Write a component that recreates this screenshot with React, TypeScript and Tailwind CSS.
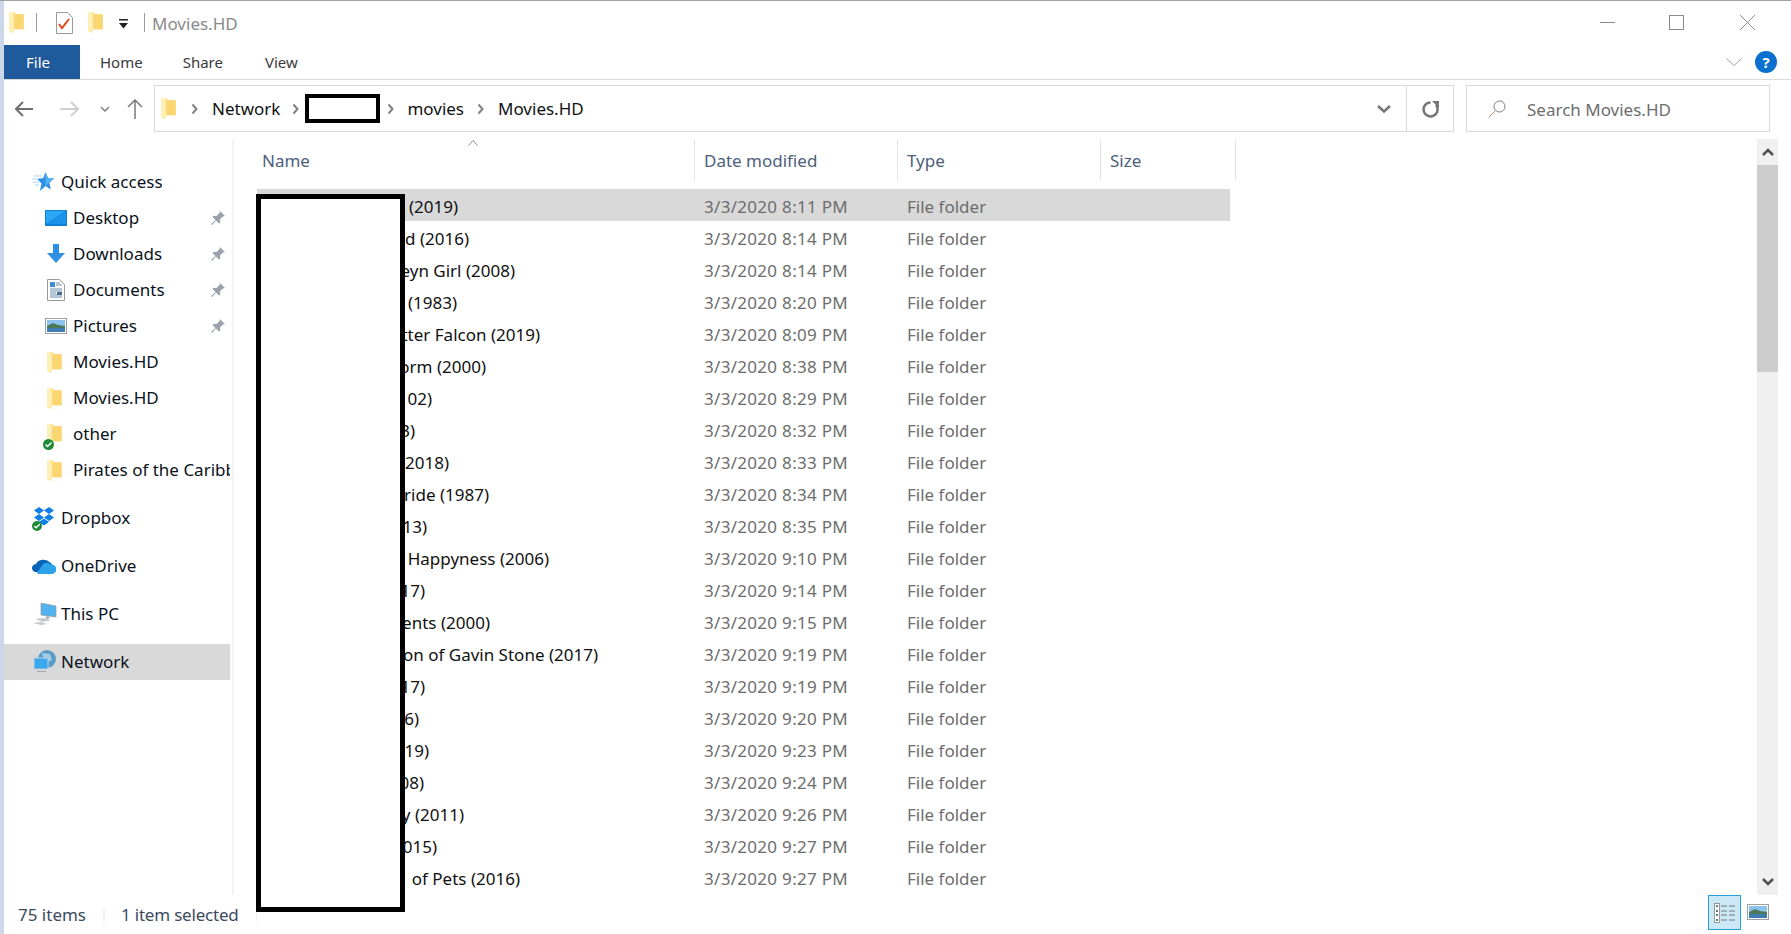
import React from "react";

const font = { fontFamily: '"Noto Sans", sans-serif' };

const rows = [
  { name: "(2019)", end: "w-[201px]", date: "3/3/2020 8:11 PM" },
  { name: "d (2016)", end: "w-[212px]", date: "3/3/2020 8:14 PM" },
  { name: "eyn Girl (2008)", end: "w-[258px]", date: "3/3/2020 8:14 PM" },
  { name: "(1983)", end: "w-[200px]", date: "3/3/2020 8:20 PM" },
  { name: "tter Falcon (2019)", end: "w-[283px]", date: "3/3/2020 8:09 PM" },
  { name: "orm (2000)", end: "w-[229px]", date: "3/3/2020 8:38 PM" },
  { name: "02)", end: "w-[175px]", date: "3/3/2020 8:29 PM" },
  { name: "3)", end: "w-[158px]", date: "3/3/2020 8:32 PM" },
  { name: "2018)", end: "w-[192px]", date: "3/3/2020 8:33 PM" },
  { name: "ride (1987)", end: "w-[232px]", date: "3/3/2020 8:34 PM" },
  { name: "13)", end: "w-[170px]", date: "3/3/2020 8:35 PM" },
  { name: "Happyness (2006)", end: "w-[292px]", date: "3/3/2020 9:10 PM" },
  { name: "17)", end: "w-[168px]", date: "3/3/2020 9:14 PM" },
  { name: "ents (2000)", end: "w-[233px]", date: "3/3/2020 9:15 PM" },
  { name: "on of Gavin Stone (2017)", end: "w-[341px]", date: "3/3/2020 9:19 PM" },
  { name: "17)", end: "w-[168px]", date: "3/3/2020 9:19 PM" },
  { name: "6)", end: "w-[162px]", date: "3/3/2020 9:20 PM" },
  { name: "19)", end: "w-[172px]", date: "3/3/2020 9:23 PM" },
  { name: "08)", end: "w-[167px]", date: "3/3/2020 9:24 PM" },
  { name: "y (2011)", end: "w-[207px]", date: "3/3/2020 9:26 PM" },
  { name: "015)", end: "w-[180px]", date: "3/3/2020 9:27 PM" },
  { name: "of Pets (2016)", end: "w-[263px]", date: "3/3/2020 9:27 PM" },
];

const Folder = ({ className }: { className?: string }) => (
  <svg viewBox="0 0 15 22" className={className}>
    <path d="M0 0h5l2 2h8v16H5l-1 4-4-2z" fill="#fbdc82" />
    <path d="M6 3h9v15H6z" fill="#fad671" />
    <path d="M0 0h4.500v21L0 20z" fill="#fff0b8" />
  </svg>
);

const Pin = () => (
  <svg viewBox="0 0 16 16" className="h-[16px] w-[16px]">
    <path d="M10 1l5 5-2 .5-3 3 .2 3-1.2 1-3-3L2 15l-1-1 4.500-4-3-3 1-1.200 3 .2 3-3z" fill="#9aa3ab" />
  </svg>
);

const Star = () => (
  <svg viewBox="0 0 22 20" className="h-[20px] w-[22px]">
    <path d="M13.500 0l2.500 6 6 .6-4.600 4.200 1.400 6.700-5.300-3.500-5.600 5 1.600-7.500L5 6.800l6.200-.6z" fill="#2b90e8" />
    <path d="M13.500 0l2.500 6 6 .6-8.500 7.400z" fill="#55b2f5" />
    <path d="M2 4h8M0 7h5M1 10h6M3 13h4" stroke="#a9d6f7" strokeWidth="1" />
  </svg>
);

const Desktop = () => (
  <svg viewBox="0 0 22 16" className="h-[16px] w-[22px]">
    <rect width="22" height="16" fill="#0f7fd8" />
    <path d="M1 14V1h20z" fill="#2aa7f5" />
    <path d="M1 14h20V2z" fill="#1a93ea" />
  </svg>
);

const Download = () => (
  <svg viewBox="0 0 20 20" className="h-[20px] w-[20px]">
    <path d="M7 0h6v9h6l-9 10-9-10h6z" fill="#2f8fe4" />
  </svg>
);

const Documents = () => (
  <svg viewBox="0 0 18 22" className="h-[22px] w-[18px]">
    <path d="M.5.500h12l5 5v16H.5z" fill="#fff" stroke="#9a9a9a" />
    <rect x="3" y="3" width="5" height="5" fill="#3a8fd8" />
    <path d="M9 4h4M9 6h6M3 10h12M3 12h12M3 14h6M3 16h12M3 18h12" stroke="#6f8ca8" />
    <rect x="10" y="13" width="5" height="3" fill="#4a6f8a" />
  </svg>
);

const Pictures = ({ className }: { className?: string }) => (
  <svg viewBox="0 0 22 16" className={className}>
    <rect x=".5" y=".5" width="21" height="15" fill="#fff" stroke="#a0a0a0" />
    <rect x="2" y="2" width="18" height="6" fill="#8fc3ee" />
    <path d="M2 8l6-3 5 2 7 1v2H2z" fill="#4d7a5a" />
    <rect x="2" y="10" width="18" height="4" fill="#3f7cb0" />
  </svg>
);

const Check = ({ className }: { className: string }) => (
  <svg viewBox="0 0 11 11" className={className}>
    <circle cx="5.500" cy="5.500" r="5.500" fill="#1d8a36" />
    <path d="M2.500 5.500l2 2 4-4" stroke="#fff" strokeWidth="1.500" fill="none" />
  </svg>
);

const Dropbox = () => (
  <svg viewBox="0 0 24 22" className="h-[22px] w-[24px]">
    <path d="M7 0l5 3.500L7 7 2 3.500zM17 0l5 3.500L17 7l-5-3.500zM7 7l5 3.500L7 14l-5-3.500zM17 7l5 3.500L17 14l-5-3.500zM12 11.500l5 3.500-5 3.500L7 15z" fill="#0f7ee8" />
  </svg>
);

const OneDrive = () => (
  <svg viewBox="0 0 24 16" className="h-[16px] w-[24px]">
    <path d="M4 6a8 6.500 0 0 1 14-1.500 5 5 0 0 1 2 1.500l-9 8H5A4.500 4 0 0 1 4 6z" fill="#0a63b8" />
    <path d="M10 7.500a5.500 5 0 0 1 9-1 4.700 4.700 0 0 1 1 9.500H6l-1-1z" fill="#2ba3e8" />
  </svg>
);

const ThisPc = () => (
  <svg viewBox="0 0 24 22" className="h-[22px] w-[24px]">
    <path d="M8 0l15 3v11L8 12z" fill="#4fb3f0" stroke="#9a9a9a" strokeWidth=".7" />
    <path d="M14 13l3 1-2 2-3-1z" fill="#a8b0b8" />
    <path d="M2 16l8-1 8 2-8 2zM0 20l8-1 6 2-6 1z" fill="#c4c8cc" />
  </svg>
);

const NetworkIcon = () => (
  <svg viewBox="0 0 24 24" className="h-[24px] w-[24px]">
    <circle cx="14" cy="9" r="9" fill="#5a9cc8" />
    <path d="M9 3l8 1 2 6-7 3z" fill="#a5cbe2" />
    <rect x="1" y="8" width="14" height="11" fill="#39a8ee" stroke="#c0d4e0" />
    <path d="M4 21h9v1H4z" fill="#a0a8b0" />
  </svg>
);

const Crumb = ({ className = "" }: { className?: string }) => (
  <svg viewBox="0 0 7 12" className={`h-[12px] w-[7px] ${className}`}>
    <path d="M1.500 1.500L5.500 6l-4 4.500" stroke="#808080" strokeWidth="2" fill="none" />
  </svg>
);

const NavRow = ({
  icon,
  label,
  pin,
  iconBox = "w-[31px] pl-[2px]",
  outer = "pl-[45px]",
  selected,
}: {
  icon: React.ReactNode;
  label: string;
  pin?: boolean;
  iconBox?: string;
  outer?: string;
  selected?: boolean;
}) => (
  <div className={`flex h-[36px] items-center overflow-hidden ${outer} ${selected ? "bg-[#d9d9d9]" : ""}`}>
    <span className={`relative flex shrink-0 items-center ${iconBox}`}>{icon}</span>
    <span className="whitespace-nowrap text-[17px] text-[#0a1220]">{label}</span>
    {pin && (
      <span className="ml-auto mr-[4px]">
        <Pin />
      </span>
    )}
  </div>
);

const HeaderCell = ({ className, label }: { className: string; label: string }) => (
  <div className={`flex h-[41px] items-center border-r border-[#e5e5e5] pt-[2px] text-[17px] text-[#4c607a] ${className}`}>
    {label}
  </div>
);

export default function App() {
  return (
    <div className="flex h-[934px] w-[1791px] overflow-hidden bg-white" style={font}>
      <div className="w-[4px] shrink-0 bg-[#ccd7e9]" />
      <div className="relative flex min-w-0 flex-1 flex-col">
        <div className="absolute -left-[4px] right-0 top-0 h-[1px] bg-[#a0a0a0]" />

        {/* title bar */}
        <div className="flex h-[45px] shrink-0 items-center">
          <Folder className="ml-[5px] h-[21px] w-[15px]" />
          <div className="ml-[12px] h-[19px] w-[1px] bg-[#9a9a9a]" />
          <svg viewBox="0 0 17 22" className="ml-[19px] h-[22px] w-[17px]">
            <path d="M.500.500h11l5 5v16H.500z" fill="#fff" stroke="#999" />
            <path d="M3 12l3 4 7-9" stroke="#e0481c" strokeWidth="2" fill="none" />
          </svg>
          <Folder className="ml-[15px] h-[21px] w-[15px]" />
          <svg viewBox="0 0 9 10" className="ml-[16px] mt-[3px] h-[10px] w-[9px]">
            <path d="M0 0h9v1.500H0zM0 4h9L4.500 9.500z" fill="#222" />
          </svg>
          <div className="ml-[16px] h-[19px] w-[1px] bg-[#9a9a9a]" />
          <span className="ml-[7px] pt-[2px] text-[17px] text-[#8a8a8a]">Movies.HD</span>
          <div className="ml-auto flex items-center pr-[36px]">
            <div className="h-[1px] w-[15px] bg-[#8a8a8a]" />
            <div className="ml-[54px] h-[15px] w-[15px] border border-[#8a8a8a]" />
            <svg viewBox="0 0 15 15" className="ml-[56px] h-[15px] w-[15px]">
              <path d="M0 0l15 15M15 0L0 15" stroke="#8a8a8a" strokeWidth="1" />
            </svg>
          </div>
        </div>

        {/* ribbon tabs */}
        <div className="flex h-[35px] shrink-0 items-center border-b border-[#dadada] text-[15px] text-[#3a3a3a]">
          <div className="flex h-full w-[76px] items-center justify-center bg-[#1f5a9c] pr-[8px] text-white">File</div>
          <span className="ml-[20px]">Home</span>
          <span className="ml-[40px]">Share</span>
          <span className="ml-[42px]">View</span>
          <svg viewBox="0 0 16 8" className="ml-auto h-[8px] w-[16px]">
            <path d="M.5.500L8 7.500 15.500.500" stroke="#a0a0a0" fill="none" />
          </svg>
          <div className="ml-[13px] mr-[14px] flex h-[22px] w-[22px] items-center justify-center rounded-full bg-[#0a6fcf] text-[15px] font-bold text-white">
            ?
          </div>
        </div>

        {/* address row */}
        <div className="flex h-[59px] shrink-0 items-start pt-[5px]">
          <div className="flex h-[47px] w-[150px] shrink-0 items-center">
            <svg viewBox="0 0 20 16" className="ml-[11px] h-[16px] w-[20px]">
              <path d="M1 8h17M8 1L1 8l7 7" stroke="#6f6f6f" strokeWidth="2" fill="none" />
            </svg>
            <svg viewBox="0 0 20 16" className="ml-[25px] h-[16px] w-[20px]">
              <path d="M0 8h18M11 1l7 7-7 7" stroke="#cfcfcf" strokeWidth="2" fill="none" />
            </svg>
            <svg viewBox="0 0 10 6" className="ml-[20px] h-[6px] w-[10px]">
              <path d="M1 1l4 4 4-4" stroke="#808080" strokeWidth="1.500" fill="none" />
            </svg>
            <svg viewBox="0 0 16 20" className="ml-[17px] h-[20px] w-[16px]">
              <path d="M8 20V1M1 8l7-7 7 7" stroke="#7a7a7a" strokeWidth="1.500" fill="none" />
            </svg>
          </div>
          <div className="flex h-[47px] w-[1300px] shrink-0 items-center border border-[#d9d9d9]">
            <Folder className="ml-[6px] h-[21px] w-[15px]" />
            <Crumb className="ml-[15px]" />
            <span className="ml-[14px] text-[17px] text-[#111]">Network</span>
            <Crumb className="ml-[12px]" />
            <div className="ml-[6px] h-[29px] w-[75px] border-[4px] border-black bg-white" />
            <Crumb className="ml-[7px]" />
            <span className="ml-[13px] text-[17px] text-[#111]">movies</span>
            <Crumb className="ml-[13px]" />
            <span className="ml-[14px] text-[17px] text-[#111]">Movies.HD</span>
            <svg viewBox="0 0 14 8" className="ml-auto mr-[15px] h-[8px] w-[14px]">
              <path d="M1 1l6 5.500L13 1" stroke="#757575" strokeWidth="2.500" fill="none" />
            </svg>
            <div className="flex h-full w-[47px] items-center justify-center border-l border-[#d9d9d9] pl-[2px]">
              <svg viewBox="0 0 18 18" className="h-[18px] w-[18px]">
                <path d="M14 5a7 7 0 1 1-5.500-2.600" stroke="#757575" strokeWidth="2.500" fill="none" />
                <path d="M10 1h7v7z" fill="#757575" />
              </svg>
            </div>
          </div>
          <div className="ml-[12px] flex h-[47px] w-[304px] shrink-0 items-center border border-[#d9d9d9]">
            <svg viewBox="0 0 18 18" className="ml-[21px] h-[18px] w-[18px]">
              <circle cx="11.500" cy="6.500" r="5.500" stroke="#7a7a7a" fill="none" />
              <path d="M7.500 10.500L.5 17.500" stroke="#c48b62" />
            </svg>
            <span className="ml-[21px] pt-[2px] text-[17px] text-[#6d6d6d]">Search Movies.HD</span>
          </div>
        </div>

        {/* body */}
        <div className="flex min-h-0 flex-1">
          <div className="w-[226px] shrink-0 pt-[25px]">
            <NavRow icon={<Star />} label="Quick access" outer="pl-[28px]" iconBox="w-[29px]" />
            <NavRow icon={<Desktop />} label="Desktop" pin outer="pl-[41px]" iconBox="w-[28px]" />
            <NavRow icon={<Download />} label="Downloads" pin outer="pl-[42px]" iconBox="w-[27px]" />
            <NavRow icon={<Documents />} label="Documents" pin outer="pl-[43px]" iconBox="w-[26px]" />
            <NavRow icon={<Pictures className="h-[16px] w-[22px]" />} label="Pictures" pin outer="pl-[41px]" iconBox="w-[28px]" />
            <NavRow icon={<Folder className="h-[21px] w-[15px]" />} label="Movies.HD" outer="pl-[43px]" iconBox="w-[26px]" />
            <NavRow icon={<Folder className="h-[21px] w-[15px]" />} label="Movies.HD" outer="pl-[43px]" iconBox="w-[26px]" />
            <NavRow
              icon={
                <>
                  <Folder className="h-[21px] w-[15px]" />
                  <Check className="absolute -left-[4px] bottom-[-5px] h-[11px] w-[11px]" />
                </>
              }
              label="other"
              outer="pl-[43px]"
              iconBox="w-[26px]"
            />
            <NavRow icon={<Folder className="h-[21px] w-[15px]" />} label="Pirates of the Caribbean" outer="pl-[43px]" iconBox="w-[26px]" />
            <div className="mt-[12px]">
              <NavRow
                icon={
                  <>
                    <Dropbox />
                    <Check className="absolute bottom-[-2px] left-0 h-[10px] w-[10px]" />
                  </>
                }
                label="Dropbox"
                outer="pl-[28px]"
                iconBox="w-[29px]"
              />
            </div>
            <div className="mt-[12px]">
              <NavRow icon={<OneDrive />} label="OneDrive" outer="pl-[28px]" iconBox="w-[29px]" />
            </div>
            <div className="mt-[12px]">
              <NavRow icon={<ThisPc />} label="This PC" outer="pl-[29px]" iconBox="w-[28px]" />
            </div>
            <div className="mt-[12px]">
              <NavRow icon={<NetworkIcon />} label="Network" outer="pl-[29px]" iconBox="w-[28px]" selected />
            </div>
          </div>
          <div className="ml-[2px] w-[2px] shrink-0 bg-[#f3f3f3]" />

          <div className="relative min-w-0 flex-1">
            <svg viewBox="0 0 10 6" className="absolute left-[234px] top-[1px] h-[6px] w-[10px]">
              <path d="M.5 5.500L5 .5l4.500 5" stroke="#8a8a8a" fill="none" />
            </svg>
            <div className="flex pl-[23px]">
              <HeaderCell className="w-[438px] pl-[5px]" label="Name" />
              <HeaderCell className="w-[203px] pl-[9px]" label="Date modified" />
              <HeaderCell className="w-[203px] pl-[9px]" label="Type" />
              <HeaderCell className="w-[135px] pl-[9px]" label="Size" />
            </div>
            <div className="mt-[9px] pl-[23px]">
              {rows.map((row, i) => (
                <div
                  key={i}
                  className={`flex h-[32px] w-[973px] items-center pt-[4px] text-[17px] ${i === 0 ? "bg-[#d9d9d9]" : ""}`}
                >
                  <div className="w-[437px] shrink-0">
                    <div className={`whitespace-nowrap text-right text-[#111] ${row.end}`}>{row.name}</div>
                  </div>
                  <div className="w-[203px] shrink-0 pl-[10px] tracking-[0.3px] text-[#6d6d6d]">{row.date}</div>
                  <div className="pl-[10px] text-[#6d6d6d]">File folder</div>
                </div>
              ))}
            </div>
          </div>

          {/* scrollbar */}
          <div className="mr-[13px] flex w-[21px] shrink-0 flex-col bg-[#f0f0f0]">
            <div className="flex h-[26px] items-center justify-center">
              <svg viewBox="0 0 12 8" className="h-[8px] w-[12px]">
                <path d="M1 7l5-5 5 5" stroke="#505050" strokeWidth="2.500" fill="none" />
              </svg>
            </div>
            <div className="h-[207px] bg-[#cdcdcd]" />
            <div className="mt-auto flex h-[26px] items-center justify-center">
              <svg viewBox="0 0 12 8" className="h-[8px] w-[12px]">
                <path d="M1 1l5 5 5-5" stroke="#505050" strokeWidth="2.500" fill="none" />
              </svg>
            </div>
          </div>
        </div>

        {/* status bar */}
        <div className="flex h-[39px] shrink-0 items-center text-[17px] text-[#3b4a5e]">
          <span className="ml-[14px] w-[85px]">75 items</span>
          <div className="h-[16px] w-[2px] bg-[#f3f3f3]" />
          <span className="ml-[16px] w-[136px] whitespace-nowrap tracking-[-0.2px]">1 item selected</span>
          <div className="ml-[-1px] h-[16px] w-[1px] bg-[#f3f3f3]" />
          <div className="ml-auto flex h-[35px] w-[33px] items-center justify-center self-start border border-[#26a0da] bg-[#cbe8f6]">
            <svg viewBox="0 0 22 20" className="h-[20px] w-[22px]">
              <rect x=".5" y=".5" width="5" height="19" fill="#fff" stroke="#999" />
              <path d="M2 3h2M2 8h2M2 12h2M2 17h2" stroke="#5a7a8a" strokeWidth="2" />
              <path d="M7 3h6M15 3h6M7 8h6M15 8h6M7 12h6M15 12h6M7 17h6M15 17h6" stroke="#777" strokeWidth="1" />
            </svg>
          </div>
          <div className="ml-[6px] mr-[22px] self-start pt-[9px]">
            <Pictures className="h-[16px] w-[22px]" />
          </div>
        </div>

        {/* redaction block painted over the name column */}
        <div className="absolute left-[252px] top-[194px] h-[718px] w-[149px] border-[5px] border-black bg-white" />
      </div>
    </div>
  );
}
